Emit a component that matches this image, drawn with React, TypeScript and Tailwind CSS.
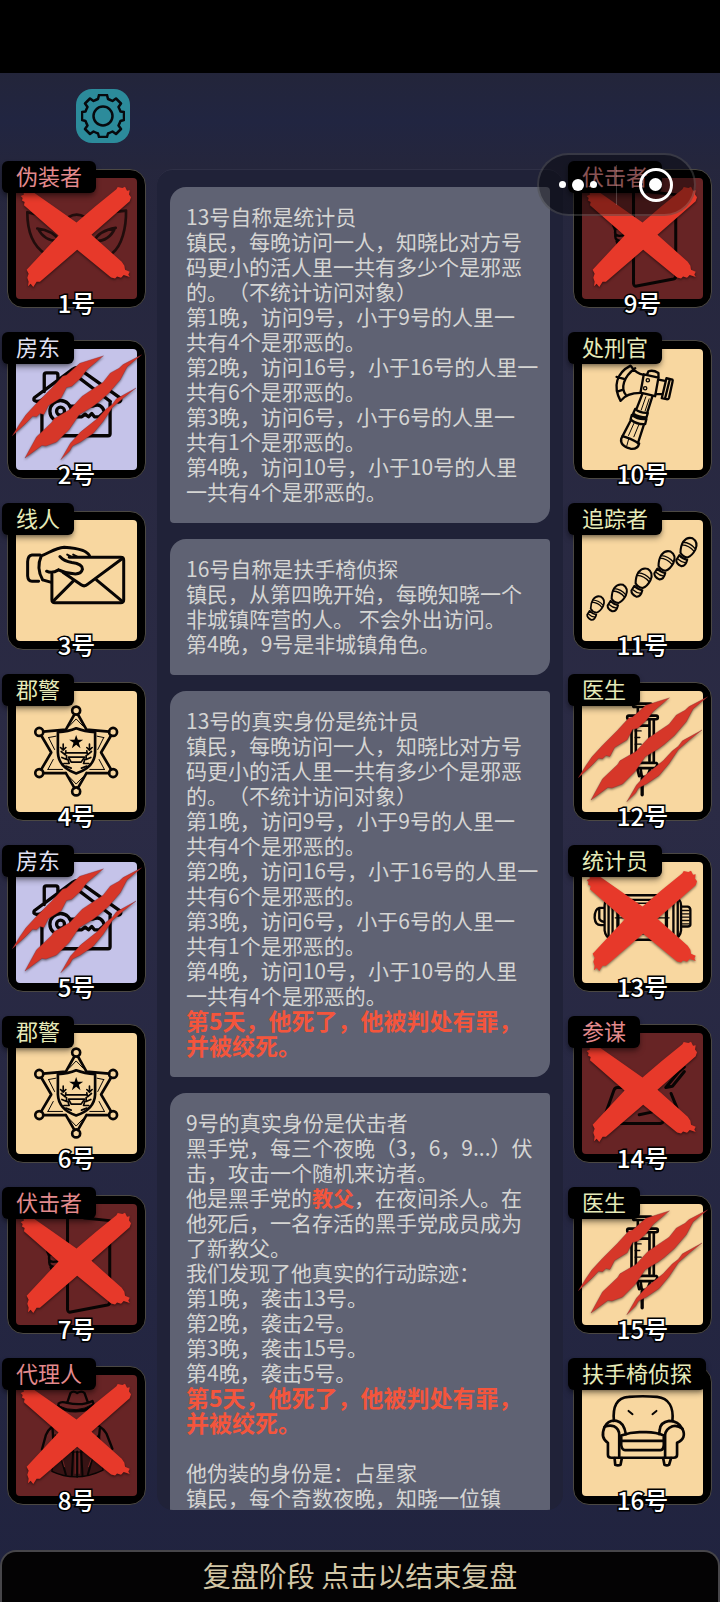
import type { ReactNode } from "react";
import clsx from "clsx";

type Team = "town" | "mafia" | "neutral";
type Mark = "cross" | "claw";
type Player = { no: number; role: string; team: Team; icon: ReactNode; mark?: Mark };

function Mask() {
  return (
    <g strokeWidth="8" strokeOpacity="0.75">
      <path d="M34 103C34 160 52 205 88 228M34 103C62 112 92 112 118 118M158 118Q182 102 208 118C250 112 295 100 331 98C332 150 318 205 290 226" />
      <path d="M64 152Q112 158 132 190Q86 192 66 152ZM300 150Q250 158 234 190Q280 192 298 150Z" />
    </g>
  );
}

function House() {
  return (
    <g strokeWidth="10">
      <path d="M85 128V78Q85 72 91 72H120Q126 72 126 78V92M56 146L172 60Q181 53 190 60L314 148Q318 158 308 160M56 146Q48 154 62 158Q72 158 80 152L181 80L284 158M78 165V255Q78 261 84 261H277Q283 261 283 255V160" />
      <circle cx="134" cy="187" r="32" />
      <circle cx="134" cy="187" r="12" />
      <path d="M162 172H230Q258 160 266 190L250 204H236L228 194L218 204L208 196L198 204H162" />
    </g>
  );
}

function HandLetter() {
  return (
    <g strokeWidth="9">
      <path d="M108 163V240Q108 249 117 249H315Q324 249 324 240V121Q324 112 315 112H160" />
      <path d="M142 158L196 195Q206 202 216 193L320 116M112 244L172 184M242 180L320 245" />
      <path d="M72 105H48Q36 106 35 125V168Q36 184 48 184H68" />
      <path d="M80 180Q60 145 76 108C102 98 118 84 145 82C178 84 216 90 222 110M80 180L104 187M92 154Q108 162 128 150M132 110Q144 124 168 128Q200 132 200 148Q196 164 174 162Q148 160 128 150" />
      <path strokeWidth="6" d="M154 104L166 110M172 104L184 110" />
    </g>
  );
}

function Badge() {
  return (
    <g strokeWidth="8">
      <path d="M176 70L150 116L82 122M186 70L212 116L280 122M286 134L256 185L286 236M212 247L280 247M212 247L186 292M150 247L176 292M150 247H82M76 236L106 185L76 134" />
      {[[181, 59], [292, 123], [292, 247], [181, 302], [70, 247], [70, 123]].map(([x, y]) => (
        <circle key={`${x}-${y}`} cx={x} cy={y} r="12" />
      ))}
      <path d="M126 124Q158 122 181 112Q206 122 238 124V185Q236 230 181 248Q128 230 126 185Z" />
      <path strokeWidth="3" d="M160 106L181 84L202 106M98 140L120 136M98 140L116 176M264 140L244 136M264 140L246 176M96 236H140M96 236L112 206M266 236H222M266 236L250 206M160 258L181 280L202 258" />
      <path fill="#000" stroke="none" d="M181 132L186 147H202L189 156L194 172L181 162L168 172L173 156L160 147H176Z" />
      <path strokeWidth="5" d="M152 186H210M158 199H206L196 214H166ZM142 160V178L134 170M142 178L150 170M136 182L148 192L150 180M138 200L152 206L152 194M144 218L160 218L156 206M150 226L166 232M221 160V178L213 170M221 178L229 170M227 182L215 192L213 180M225 200L211 206L211 194M219 218L203 218L207 206M213 226L197 232" />
    </g>
  );
}

function Door() {
  return (
    <g>
      <path strokeWidth="9" d="M155 40V318Q156 327 165 325L275 304Q282 302 282 296V50L205 42" />
      <path strokeWidth="7" d="M94 140Q94 152 108 152L132 156M94 140L100 158Q96 172 112 174L136 172M100 160V176Q100 188 118 190L140 194M104 190Q108 206 130 204" />
    </g>
  );
}

function Agent() {
  return (
    <g>
      <path strokeWidth="7" d="M154 84L164 54Q172 46 184 54Q198 46 206 54L216 82M128 86Q124 96 146 104Q182 116 218 102Q240 94 230 78Q200 94 154 84Q136 78 128 86Z" />
      <path fill="#000" strokeWidth="3" d="M126 92Q182 120 234 86Q230 106 200 110Q160 112 126 92Z" />
      <path strokeWidth="7" d="M142 140Q102 150 90 180L78 224M216 140Q258 150 272 176L290 222M110 162L116 256M252 162L244 256" />
      <path fill="#000" fillOpacity="0.45" strokeWidth="4" d="M118 180L108 290Q182 325 262 286L250 180L200 232H166Z" />
      <path strokeWidth="6" d="M172 228L168 302M196 228L200 302M184 230V306M128 220L150 300M238 220L216 300" />
      <path stroke="#a33434" strokeWidth="2" d="M178 234V296M190 234V296M140 254L146 276M226 254L218 276" />
    </g>
  );
}

function Axe() {
  return (
    <g strokeWidth="7">
      <path d="M146 50C104 72 92 112 116 156Q134 132 176 132M146 50Q162 74 186 78M160 58C124 84 116 118 132 138M104 84L126 90M106 128L124 122" />
      <path d="M186 76L230 86L220 142L176 131Z" />
      <path d="M196 76L200 67Q214 62 230 72L230 84" />
      <path d="M230 92L250 96M222 136L240 136M254 88L272 92Q274 94 272 100L262 146Q260 152 254 151L240 148ZM264 92L250 148" />
      <circle cx="198" cy="94" r="5" strokeWidth="4" />
      <circle cx="190" cy="118" r="5" strokeWidth="4" />
      <path d="M182 134L164 180M212 142L196 192M160 180Q176 194 198 192L194 206Q170 206 154 194ZM150 198Q170 214 194 210L190 226Q166 228 146 212ZM146 216L122 262M186 228L168 284" />
      <path d="M122 262Q144 268 172 284Q168 302 146 300Q114 292 118 270Z" />
      <path strokeWidth="3" d="M192 144L178 184M202 150L190 186M156 224L140 260M170 230L156 264M140 272L134 294" />
    </g>
  );
}

function Step({ x, y, s }: { x: number; y: number; s: number }) {
  return (
    <g transform={`translate(${x} ${y}) rotate(25) scale(${s})`} strokeWidth="6">
      <path d="M0 -42Q20 -40 21 -16Q20 4 10 14Q-4 18 -14 10Q-22 -8 -20 -22Q-16 -40 0 -42Z" />
      <path d="M-14 18Q0 24 12 20Q16 40 4 44Q-12 44 -16 34Z" />
      <path strokeWidth="4" d="M-20 -20Q0 -28 20 -18M-20 -12Q0 -20 20 -10M-12 30Q0 34 12 30" />
    </g>
  );
}

function Footprints() {
  return (
    <g>
      <Step x={41} y={264} s={0.88} />
      <Step x={106} y={233} s={1} />
      <Step x={179} y={187} s={1.05} />
      <Step x={248} y={135} s={1.05} />
      <Step x={314} y={95} s={1.05} />
    </g>
  );
}

function Syringe() {
  return (
    <g strokeWidth="8">
      <rect x="154" y="38" width="56" height="10" rx="4" />
      <path d="M168 50V72M197 50V72" />
      <rect x="136" y="74" width="92" height="11" rx="5" />
      <path d="M149 88V214M216 88V214M162 88V210M203 88V210M162 104H203M149 216H220Q228 216 226 224L220 232H158M176 232L180 258H196L206 232M166 232L172 256" />
      <path strokeWidth="10" d="M181 262V312" />
      <path strokeWidth="4" d="M160 120H178M160 140H174M160 160H178" />
    </g>
  );
}

function Counter() {
  return (
    <g strokeWidth="7">
      <path d="M98 100H268M92 114H274M98 234H268M86 106Q68 112 68 130V206Q70 226 90 234M280 106Q298 112 298 130V206Q296 226 276 234" />
      <path d="M80 118V222M92 120V224M288 118V222M275 120V224" />
      <rect x="108" y="132" width="34" height="70" rx="8" strokeWidth="10" />
      <rect x="220" y="132" width="34" height="70" rx="8" strokeWidth="10" />
      <path d="M66 138H52Q38 142 38 168Q40 190 56 190H66M52 140V170Q54 178 66 180M298 134H318Q326 136 326 144V188Q326 194 318 194H298" />
      <path strokeWidth="4" d="M302 146H322M302 156H322M302 166H322M302 176H322M302 186H322M100 168H262M110 124H258M110 216H258" />
    </g>
  );
}

function Plotter() {
  return (
    <g strokeWidth="9">
      <path d="M140 164H106Q99 164 96 172L64 262Q62 272 72 272H236Q246 270 244 262M268 182L286 226" />
      <path d="M308 102L290 118L252 164L272 160L308 116M172 246L210 238" />
    </g>
  );
}

function Armchair() {
  return (
    <g strokeWidth="8">
      <path d="M96 138C92 96 104 68 140 66Q182 62 226 66C262 70 276 98 272 138" />
      <path d="M68 156Q54 190 78 204V240Q78 249 88 249H276Q286 249 286 240V204Q316 190 302 162Q290 138 262 138Q236 142 234 164L232 178M68 156Q80 134 104 138Q126 142 132 178" />
      <path d="M68 156Q82 150 96 154Q112 162 112 180V246M302 162Q288 150 272 154Q252 162 250 180V246" />
      <path d="M118 198V182Q150 170 182 172Q220 170 246 182V198ZM118 198Q116 226 130 226H236Q248 226 246 198M98 250L100 270Q108 274 116 270L120 250M244 250L248 270Q256 274 262 270L268 250" />
      <path strokeWidth="6" d="M140 108L152 118M224 108L212 118" />
    </g>
  );
}

function Cross() {
  return (
    <path
      fill="#e7392a"
      stroke="none"
      d="M47 39L120 90L182 134L240 84L302 34L306 27L320 30L328 26L334 38L342 37L340 50L346 58L342 70L227 171L318 252L326 264L328 276L342 282L338 290L342 298L324 292L316 300L304 296L298 302L286 299L184 216L72 312L62 312L52 328L44 318L36 326L38 312L34 300L38 288L32 276L128 173L24 82L26 72L18 68L20 60L14 54L24 50L22 42L36 44L38 37Z"
    />
  );
}

function Claws() {
  return (
    <path
      fill="#d63729"
      stroke="#7f2430"
      strokeWidth="1"
      d="M262 21L192 43L152 78L140 82L107 118L62 163L30 198L12 224L-11 261L30 223L50 202L62 204L72 194L84 197L98 170L136 147L152 116L168 112L192 90L214 62ZM377 18L322 47L310 58L284 72L262 100L199 142L162 182L114 210L108 220L62 264L27 328L78 290L90 292L122 280L160 242L190 198L230 174L248 160L278 134L314 92L334 54ZM360 118L302 150L290 166L272 180L244 210L194 250L164 283L135 333L162 306L170 292L194 280L232 254L262 218L290 176L322 148Z"
    />
  );
}

const leftPlayers: Player[] = [
  { no: 1, role: "伪装者", team: "mafia", icon: <Mask />, mark: "cross" },
  { no: 2, role: "房东", team: "neutral", icon: <House />, mark: "claw" },
  { no: 3, role: "线人", team: "town", icon: <HandLetter /> },
  { no: 4, role: "郡警", team: "town", icon: <Badge /> },
  { no: 5, role: "房东", team: "neutral", icon: <House />, mark: "claw" },
  { no: 6, role: "郡警", team: "town", icon: <Badge /> },
  { no: 7, role: "伏击者", team: "mafia", icon: <Door />, mark: "cross" },
  { no: 8, role: "代理人", team: "mafia", icon: <Agent />, mark: "cross" },
];

const rightPlayers: Player[] = [
  { no: 9, role: "伏击者", team: "mafia", icon: <Door />, mark: "cross" },
  { no: 10, role: "处刑官", team: "town", icon: <Axe /> },
  { no: 11, role: "追踪者", team: "town", icon: <Footprints /> },
  { no: 12, role: "医生", team: "town", icon: <Syringe />, mark: "claw" },
  { no: 13, role: "统计员", team: "town", icon: <Counter />, mark: "cross" },
  { no: 14, role: "参谋", team: "mafia", icon: <Plotter />, mark: "cross" },
  { no: 15, role: "医生", team: "town", icon: <Syringe />, mark: "claw" },
  { no: 16, role: "扶手椅侦探", team: "town", icon: <Armchair /> },
];

const counterLog = [
  "镇民，每晚访问一人，知晓比对方号",
  "码更小的活人里一共有多少个是邪恶",
  "的。（不统计访问对象）",
  "第1晚，访问9号，小于9号的人里一",
  "共有4个是邪恶的。",
  "第2晚，访问16号，小于16号的人里一",
  "共有6个是邪恶的。",
  "第3晚，访问6号，小于6号的人里一",
  "共有1个是邪恶的。",
  "第4晚，访问10号，小于10号的人里",
  "一共有4个是邪恶的。",
];

function PlayerCard({ no, role, team, icon, mark }: Player) {
  return (
    <button type="button" className="relative block size-[139px] shrink-0 rounded-2xl border border-[#4b4843] bg-black p-2">
      <span
        className={clsx(
          "block size-full rounded-sm",
          team === "mafia" && "bg-[#672425]",
          team === "town" && "bg-[#f8d7a0]",
          team === "neutral" && "bg-[#c5c3e9]"
        )}
      >
        <svg viewBox="0 0 364 364" className="size-full overflow-visible" fill="none" stroke="#080504" strokeWidth="7" strokeLinecap="round" strokeLinejoin="round">
          {icon}
          <g className="drop-shadow-[0_4px_4px_rgba(0,0,0,0.5)]">
            {mark === "cross" && <Cross />}
            {mark === "claw" && <Claws />}
          </g>
        </svg>
      </span>
      <span
        className={clsx(
          "absolute -left-1.5 -top-[9px] h-8 whitespace-nowrap rounded-md bg-black px-3.5 text-[22px] leading-[28px] shadow-md shadow-black/40",
          team === "mafia" && "text-[#e38a8d]",
          team === "town" && "text-[#e6eab8]",
          team === "neutral" && "text-[#e0e0f2]"
        )}
      >
        {role}
      </span>
      <span className="absolute inset-x-0 -bottom-2.5 text-center text-2xl leading-7 font-medium text-white [-webkit-text-stroke:3px_#000] [paint-order:stroke_fill]">
        {no}号
      </span>
    </button>
  );
}

function LogCard({ children }: { children: ReactNode }) {
  return (
    <article className="shrink-0 whitespace-nowrap rounded-tl-2xl rounded-tr rounded-br-2xl rounded-bl bg-[#5f6273] pt-[17px] pb-[19px] pl-4 text-[21px] leading-[25px] text-[#d5d5d3]">
      {children}
    </article>
  );
}

function Lines({ items }: { items: string[] }) {
  return (
    <>
      {items.map((line, i) => (
        <p key={i}>{line}</p>
      ))}
    </>
  );
}

function Verdict() {
  return (
    <div className="text-[23px] font-bold text-[#f4553c]">
      <p>第5天，他死了，他被判处有罪，</p>
      <p>并被绞死。</p>
    </div>
  );
}

function Capsule() {
  return (
    <div className="absolute right-6 top-20 z-10 flex h-[63px] w-[159px] items-center rounded-full border-2 border-white/15 bg-black/40">
      <button type="button" aria-label="更多" className="flex h-full flex-1 items-center justify-center gap-1.5">
        <span className="size-[7px] rounded-full bg-white" />
        <span className="size-3 rounded-full bg-white" />
        <span className="size-[7px] rounded-full bg-white" />
      </button>
      <span className="h-10 w-px bg-white/20" />
      <button type="button" aria-label="关闭" className="flex h-full flex-1 items-center justify-center">
        <span className="flex size-[34px] items-center justify-center rounded-full border-3 border-white">
          <span className="size-[13px] rounded-full bg-white" />
        </span>
      </button>
    </div>
  );
}

export default function App() {
  return (
    <div className="flex h-screen flex-col overflow-hidden bg-linear-to-b from-[#24253b] via-[#2b2b45] to-[#20233f] font-['Noto_Sans_CJK_SC',sans-serif] [text-spacing-trim:space-all]">
      <div className="h-[73px] shrink-0 bg-black" />
      <header className="relative h-24 shrink-0 bg-linear-to-b from-[#23253a] via-[#212541] to-[#25263c] pl-19 pt-4">
        <button type="button" aria-label="设置" className="flex size-[54px] items-center justify-center rounded-2xl bg-[#2c8b9b]">
          <svg viewBox="0 0 44 44" className="size-11" fill="none" stroke="#07090d" strokeWidth="2.5" strokeLinejoin="round">
            <path d="M17 5L18 1H26L27 5Q29.500 6 31.500 7L35 4.500L40 9.500L37.500 13Q38.500 15 39.500 17.500L43 18V26L39.500 27Q38.500 29.500 37.500 31.500L40 35L35 40L31.500 37.500Q29.500 38.500 27 39.500L26 43H18L17 39.500Q14.500 38.500 12.500 37.500L9 40L4 35L6.500 31.500Q5.500 29.500 4.500 27L1 26V18L4.500 17.500Q5.500 15 6.500 13L4 9.500L9 4.500L12.500 7Q14.500 6 17 5Z" />
            <circle cx="22" cy="22" r="9.500" />
          </svg>
        </button>
        <Capsule />
      </header>

      <main className="flex min-h-0 flex-1 justify-between pl-[7px] pr-2">
        <section className="flex shrink-0 flex-col gap-8">
          {leftPlayers.map((p) => (
            <PlayerCard key={p.no} {...p} />
          ))}
        </section>

        <section className="ml-[11px] mr-2.5 flex min-w-0 flex-1 flex-col gap-4 overflow-hidden rounded-2xl border-t border-[#2f3046] bg-[#202238] px-[13px] pt-[17px]">
          <LogCard>
            <p>13号自称是统计员</p>
            <Lines items={counterLog} />
          </LogCard>
          <LogCard>
            <Lines
              items={[
                "16号自称是扶手椅侦探",
                "镇民，从第四晚开始，每晚知晓一个",
                "非城镇阵营的人。 不会外出访问。",
                "第4晚，9号是非城镇角色。",
              ]}
            />
          </LogCard>
          <LogCard>
            <p>13号的真实身份是统计员</p>
            <Lines items={counterLog} />
            <Verdict />
          </LogCard>
          <LogCard>
            <Lines items={["9号的真实身份是伏击者", "黑手党，每三个夜晚（3，6，9...）伏", "击，攻击一个随机来访者。"]} />
            <p>
              他是黑手党的<b className="text-[#f4553c]">教父</b>，在夜间杀人。在
            </p>
            <Lines
              items={[
                "他死后，一名存活的黑手党成员成为",
                "了新教父。",
                "我们发现了他真实的行动踪迹：",
                "第1晚，袭击13号。",
                "第2晚，袭击2号。",
                "第3晚，袭击15号。",
                "第4晚，袭击5号。",
              ]}
            />
            <Verdict />
            <p>&nbsp;</p>
            <Lines items={["他伪装的身份是：占星家", "镇民，每个奇数夜晚，知晓一位镇"]} />
          </LogCard>
        </section>

        <section className="flex shrink-0 flex-col gap-8">
          {rightPlayers.map((p) => (
            <PlayerCard key={p.no} {...p} />
          ))}
        </section>
      </main>

      <footer className="mt-10 shrink-0">
        <button type="button" className="block h-[52px] w-full rounded-t-2xl border-2 border-b-0 border-[#47464a] bg-[#040304] pb-1 text-[28px] leading-[44px] text-[#d3c7a6]">
          复盘阶段 点击以结束复盘
        </button>
      </footer>
    </div>
  );
}
